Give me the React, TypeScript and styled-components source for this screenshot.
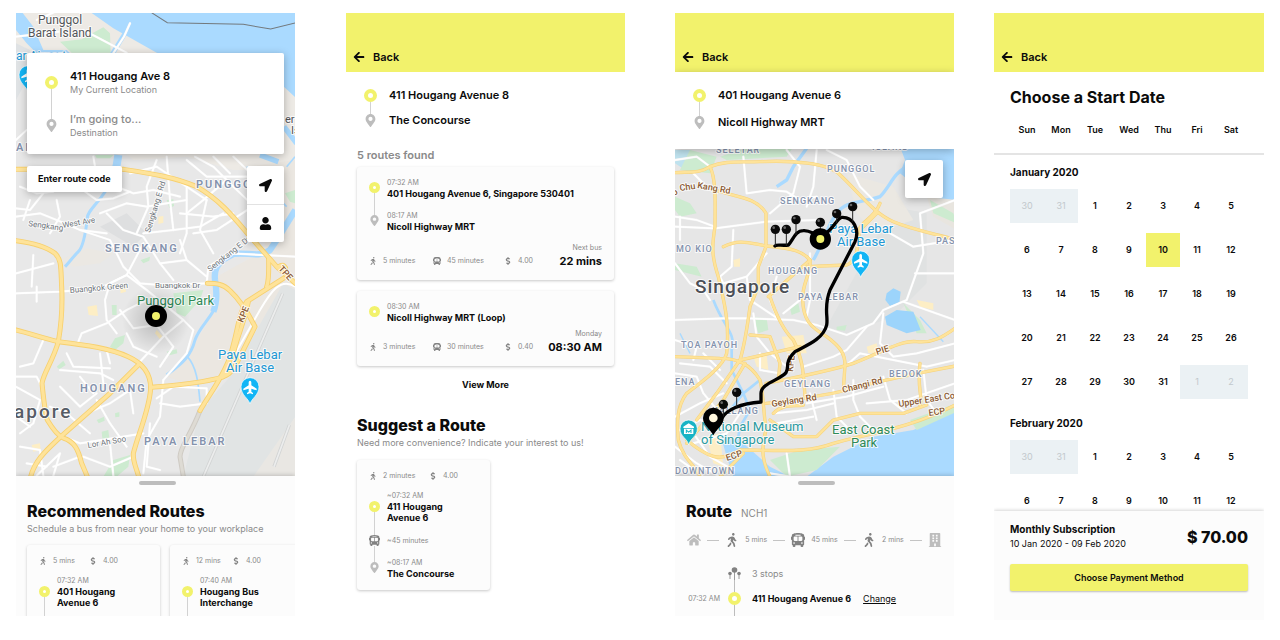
import React from "react";
import styled, { createGlobalStyle, css } from "styled-components";
import {
  FaArrowLeft,
  FaBuilding,
  FaBusAlt,
  FaDollarSign,
  FaHome,
  FaLocationArrow,
  FaMapMarkerAlt,
  FaUser,
  FaWalking,
} from "react-icons/fa";

const color = {
  yellow: "#f2f26c",
  ink: "#0b0b0b",
  grey: "#8a8a8a",
  icon: "#828282",
  pale: "#bdbdbd",
  line: "#d2d2d2",
  sheet: "#fcfcfc",
  blocked: "#ebf1f4",
};

const GlobalStyle = createGlobalStyle`
  *, *::before, *::after { box-sizing: border-box; }
  body {
    margin: 0;
    background: #fff;
    color: ${color.ink};
    font-family: Inter, "Liberation Sans", sans-serif;
    font-size: 10px;
    line-height: 12px;
  }
  h1, h2, h3, p, ol, ul { margin: 0; padding: 0; font-weight: inherit; }
  ol, ul { list-style: none; }
  button, input {
    font: inherit;
    color: inherit;
    border: 0;
    padding: 0;
    background: none;
  }
  button { cursor: pointer; }
  svg { display: block; }
`;

/* ---------- page ---------- */

const Page = styled.main`
  display: grid;
  grid-template-columns: 279fr 51px 279fr 50px 279fr 40px 270fr;
  align-items: start;
  padding: 13px 16px;
`;

const Screen = styled.section<{ $column: number; $height?: number }>`
  grid-column: ${(p) => p.$column};
  height: ${(p) => (p.$height ? `${p.$height}px` : "auto")};
  display: flex;
  flex-direction: column;
  min-width: 0;
  overflow: hidden;
`;

const Header = styled.header`
  flex: none;
  display: flex;
  align-items: flex-end;
  height: 59px;
  padding: 0 7px 8px;
  background: ${color.yellow};
`;

const BackButton = styled.button`
  display: flex;
  align-items: center;
  gap: 8px;
  font-size: 11px;
  line-height: 14px;
  font-weight: 600;
`;

const Content = styled.div`
  padding: 0 11px;
`;

const Title = styled.h2<{ $weight?: number }>`
  font-size: 16px;
  line-height: 22px;
  font-weight: ${(p) => p.$weight ?? 800};
`;

const Subtitle = styled.p`
  font-size: 9px;
  line-height: 14px;
  color: ${color.grey};
  white-space: nowrap;
`;

/* ---------- itinerary ---------- */

const Stops = styled.ol`
  display: flex;
  flex-direction: column;
`;

const StopRow = styled.li<{ $gap: number; $text: number }>`
  display: flex;
  gap: ${(p) => p.$text}px;
  > :last-child {
    padding-bottom: ${(p) => p.$gap}px;
  }
`;

const Track = styled.span<{ $size: number }>`
  flex: none;
  display: flex;
  flex-direction: column;
  align-items: center;
  width: ${(p) => p.$size}px;
`;

const Lead = styled.span<{ $height: number; $drawn: boolean }>`
  width: 1px;
  height: ${(p) => p.$height}px;
  background: ${(p) => (p.$drawn ? color.line : "transparent")};
`;

const Tail = styled.span`
  flex: 1;
  width: 1px;
  background: ${color.line};
`;

const Ring = styled.span<{ $size: number }>`
  flex: none;
  width: ${(p) => p.$size}px;
  height: ${(p) => p.$size}px;
  border: 4px solid ${color.yellow};
  border-radius: 50%;
  background: #fff;
`;

const Place = styled.span<{ $large?: boolean }>`
  display: block;
  font-weight: ${(p) => (p.$large ? 600 : 700)};
  font-size: ${(p) => (p.$large ? 11 : 9)}px;
  line-height: ${(p) => (p.$large ? 13 : 11)}px;
`;

const Time = styled.span`
  display: block;
  font-size: 7px;
  line-height: 11px;
  color: ${color.grey};
`;

interface StopProps {
  kind: "start" | "bus" | "end";
  size?: number;
  lead?: number;
  gap?: number;
  text?: number;
  first?: boolean;
  last?: boolean;
  children: React.ReactNode;
}

function Stop({ kind, size = 11, lead = 0, gap = 0, text = 7, first, last, children }: StopProps) {
  return (
    <StopRow $gap={gap} $text={text}>
      <Track $size={size}>
        <Lead $height={lead} $drawn={!first} />
        {kind === "start" && <Ring $size={size} />}
        {kind === "bus" && <FaBusAlt size={size} color={color.icon} />}
        {kind === "end" && <FaMapMarkerAlt size={size} color={color.pale} />}
        {!last && <Tail />}
      </Track>
      <div>{children}</div>
    </StopRow>
  );
}

/* ---------- route cards ---------- */

const Card = styled.article<{ $narrow?: boolean }>`
  flex: none;
  width: ${(p) => (p.$narrow ? "133px" : "auto")};
  padding: 10px 12px 11px;
  border-radius: 3px;
  background: ${color.sheet};
  box-shadow: 0 1px 3px rgba(0, 0, 0, 0.22);
`;

const Facts = styled.ul<{ $columns: string }>`
  display: grid;
  grid-template-columns: ${(p) => p.$columns};
  font-size: 7px;
  line-height: 11px;
  color: ${color.grey};
  white-space: nowrap;
`;

const FactItem = styled.li`
  display: grid;
  grid-template-columns: 14px auto;
  align-items: center;
`;

const Fact = ({ icon, children }: { icon: React.ReactNode; children: React.ReactNode }) => (
  <FactItem>
    {icon}
    {children}
  </FactItem>
);

const CardHead = styled.div`
  margin-bottom: 9px;
`;

const CardFoot = styled.div<{ $top: number }>`
  display: flex;
  justify-content: space-between;
  align-items: flex-end;
  margin-top: ${(p) => p.$top}px;
  ${Facts} {
    line-height: 16px;
  }
`;

const Departure = styled.p`
  font-size: 7px;
  line-height: 11px;
  color: ${color.grey};
  text-align: right;
  white-space: nowrap;
  strong {
    display: block;
    font-size: 11px;
    line-height: 16px;
    font-weight: 700;
    color: ${color.ink};
  }
`;

const walk = <FaWalking size={8} color={color.icon} />;
const bus = <FaBusAlt size={8} color={color.icon} />;
const dollar = <FaDollarSign size={8} color={color.icon} />;

/* ---------- maps ---------- */

const MapArea = styled.div<{ $height: number }>`
  position: relative;
  flex: none;
  height: ${(p) => p.$height}px;
  > svg {
    width: 100%;
    height: 100%;
  }
`;

const MapLabel = styled.text<{ $size: number; $tone: string; $weight?: number; $track?: number }>`
  font-family: Roboto, sans-serif;
  font-size: ${(p) => p.$size}px;
  font-weight: ${(p) => p.$weight ?? 400};
  fill: ${(p) => p.$tone};
  letter-spacing: ${(p) => p.$track ?? 0}px;
  paint-order: stroke;
  stroke: rgba(255, 255, 255, 0.8);
  stroke-width: 2px;
  stroke-linejoin: round;
`;

const district = { $size: 11, $tone: "#8492ad", $weight: 600, $track: 2 };
const smallDistrict = { $size: 9, $tone: "#8492ad", $weight: 500, $track: 1 };
const street = { $size: 8, $tone: "#6f757b" };
const highway = { $size: 9, $tone: "#8a5a33", $weight: 500 };
const airport = { $size: 13, $tone: "#2196d3" };
const park = { $size: 13, $tone: "#2f8a57" };
const museum = { $size: 13, $tone: "#2a9aa0" };

const Roads = ({ paths, width, fill, edge, rim = 4 }: { paths: string[]; width: number; fill: string; edge: string; rim?: number }) => (
  <g fill="none" strokeLinecap="round" strokeLinejoin="round">
    {paths.map((d) => (
      <path key={d} d={d} stroke={edge} strokeWidth={width + rim} />
    ))}
    {paths.map((d) => (
      <path key={d} d={d} stroke={fill} strokeWidth={width} />
    ))}
  </g>
);

const AirportPin = ({ x, y }: { x: number; y: number }) => (
  <g transform={`translate(${x} ${y})`}>
    <path d="M0 52C-5 34-27 26-27 0a27 27 0 0 1 54 0C27 26 5 34 0 52Z" fill="#12b5f5" stroke="#fff" strokeWidth="2" />
    <path d="M0-18c3 0 4 3 4 6v8l16 10v5L4 6v9l5 4v4l-9-3-9 3v-4l5-4V6l-16 5V6L-4-4v-8c0-3 1-6 4-6Z" fill="#fff" />
  </g>
);

const homeStreets = [
  "M110 60L200 20M48 110L180 95M250 90L380 158M390 70L372 110L330 175",
  "M48 420L80 390M48 625L90 630L130 580M60 560L110 580L160 575",
  "M255 575L290 600L340 595L390 575M300 640L380 610L440 620L560 600M470 480L440 560L445 620L410 700",
  "M390 520L470 500L560 560L620 600M350 560L400 580L460 570L540 590M500 470L510 600L520 690",
  "M430 700L520 690L600 680L670 640M560 560L560 700L540 760M540 640L640 650L700 640",
  "M280 470L285 500L300 560M585 470L640 500L700 560L742 600M640 470L690 520M560 480L620 530L740 530",
  "M680 540L610 600L560 640M700 470L742 510M620 600L600 690L640 760M742 630L650 690L580 700",
  "M48 650L120 640L170 660L240 690L320 700M170 600L180 650L150 700M90 600L70 660",
  "M240 690L330 720L370 800L420 850L480 855L620 850M320 640L370 690L430 710L480 790L520 840",
  "M430 730L380 825L330 850L315 900L320 960L350 1000M380 825L440 870L550 960L580 990L560 1060L490 1140",
  "M48 880L180 875L300 865L380 825M110 860V905M48 820L160 790M100 765L95 860",
  "M620 850L625 800L690 760L885 770M480 790L560 780L620 830M540 720L560 780",
  "M235 1025L245 1000L320 970L380 930L440 900M360 930L400 985L470 975L520 1040L480 1100",
  "M550 960L490 1010L415 1090M320 1050L330 1090M380 1000L400 1040L470 1070",
  "M490 1140L480 1250L440 1320L430 1420M470 1195L520 1160L620 1165V1210L540 1220L480 1210",
  "M450 1270L440 1400L480 1410M48 1130L110 1130L125 1160M48 1160L120 1200L100 1270L60 1300",
  "M180 1110L300 1120L340 1140M180 1160L240 1220L290 1180M150 1220L200 1240L270 1300M260 1240L330 1210L390 1170L400 1240",
  "M190 1310L240 1330L370 1310L430 1300M290 1200L330 1270L380 1340M330 1330L340 1427M250 1370L330 1400L400 1370",
  "M110 1427L180 1360L160 1427M160 1400L240 1370M60 1340L120 1350L130 1427M48 1250L90 1280M80 1390L140 1400",
  "M200 1060L220 1100L330 1105M300 1060L310 1150M240 1130L280 1180M130 1020L100 1090L60 1100",
];

const homeHighways = [
  "M48 508L370 508C450 520 520 530 590 560C660 600 700 650 742 700L830 800L886 850",
  "M48 722C110 730 145 745 165 760C185 780 182 800 185 860C188 920 186 960 175 1025C160 1080 130 1120 126 1150C130 1190 135 1240 142 1260C160 1290 175 1308 190 1314C225 1325 235 1350 245 1390L262 1430",
  "M48 990C90 1000 130 1015 175 1025C260 1035 330 1045 385 1070C430 1090 452 1120 452 1165C448 1230 415 1300 400 1360C398 1385 408 1400 416 1430",
  "M415 1095L330 1180L180 1312C140 1350 105 1380 92 1430",
  "M452 1162C540 1155 610 1145 640 1138C690 1128 695 1115 710 1090L765 980C740 930 720 900 690 872C670 852 650 850 622 850",
  "M856 815C860 800 850 790 836 800M850 835L740 905C715 940 715 990 690 1070C670 1130 630 1180 600 1232",
  "M745 905C735 960 715 1000 700 1060L668 1130M800 860C808 840 806 800 806 775",
];

function HomeMap() {
  return (
    <svg viewBox="16 13 279 463" preserveAspectRatio="xMidYMid slice" role="img" aria-label="Map of Hougang and Punggol">
      <defs>
        <radialGradient id="glow">
          <stop offset="0" stopColor="#000" stopOpacity="0.2" />
          <stop offset="1" stopColor="#000" stopOpacity="0" />
        </radialGradient>
      </defs>
      <g transform="scale(0.33334)">
        <rect x="40" y="30" width="860" height="1410" fill="#e8e8e8" />
        <path d="M48 39H886V510H700L560 470L400 480L300 400L48 180Z" fill="#edeae5" />
        <path d="M650 830L740 780L800 760L886 770V860L800 960L720 1130L560 1150L500 1130L560 1070L640 940Z" fill="#ebe7e1" />
        <path d="M742 500L886 480V770L800 760Z" fill="#ebe7e1" />
        <path d="M180 780L260 745L340 760L300 790L220 800Z" fill="#ebe8e3" />
        <path d="M850 850L886 870V1250L770 1430H550L600 1232L690 1130Z" fill="#e1e4e4" />
        <path d="M886 1250V1430H760Z" fill="#e9e7e3" />
        <path d="M275 39H886V292L840 250L470 158L340 85Z" fill="#aadaff" />
        <path d="M48 39H68L100 80L130 150L200 150L210 160H110L80 130L48 90Z" fill="#aadaff" />
        <path d="M48 130L90 150L70 260L48 300Z" fill="#dfe2e4" />
        <path d="M450 35L502 68L730 73L812 87L890 68" fill="none" stroke="#73797d" strokeWidth="3" />
        <g fill="#cdebd0">
          <path d="M180 125L245 118L285 95L310 82L330 100L332 158H215Z" />
          <path d="M500 600L520 598L522 618L508 624Z" />
          <path d="M855 580L886 570V610L870 605Z" />
          <path d="M520 880L610 870L600 900L555 950L530 940Z" />
          <path d="M330 1040L345 1015L375 1005L370 1030L345 1050Z" />
          <path d="M170 1100L190 1082L197 1095L178 1108Z" />
          <path d="M340 1380L390 1365L385 1400L350 1430H310Z" />
          <path d="M500 1055L530 1048L532 1060L508 1066Z" />
          <path d="M305 1295L325 1290L328 1315L308 1325ZM290 1260L312 1250L314 1262L296 1270ZM345 1240L358 1236V1250L346 1252Z" />
          <path d="M335 915H350V945H337ZM422 780L450 770L448 782L430 790ZM285 465H340L330 475H290Z" />
        </g>
        <g fill="#fdeec5">
          <path d="M475 650L490 648V668L475 672ZM360 860L375 855L378 875L362 880ZM262 920L290 915L294 948L266 945ZM95 1335L120 1330L122 1350L100 1355ZM470 990L488 1010L480 1018L465 1000Z" />
        </g>
        <path d="M300 680L380 640L440 700L400 740Z" fill="#dedfe0" />
        <g fill="none" stroke="#aadaff" strokeLinejoin="round">
          <path d="M375 100L335 165" strokeWidth="14" />
          <path d="M355 465C350 510 345 510 335 545" strokeWidth="24" />
          <path d="M335 540C310 600 260 630 262 655C258 690 250 740 235 755C215 775 205 790 195 800" strokeWidth="9" />
          <path d="M852 380L890 430M780 465L835 485" strokeWidth="16" />
          <path d="M886 630L830 720L810 750C780 775 740 755 700 762C660 780 640 800 645 840C652 880 650 910 640 935" strokeWidth="19" />
          <path d="M645 925C620 970 600 980 585 1020C570 1080 530 1100 500 1125" strokeWidth="9" />
          <path d="M562 1070C590 1100 595 1150 600 1205M860 500L885 470M740 500L860 620" strokeWidth="5" />
        </g>
        <Roads paths={homeStreets} width={5} fill="#fff" edge="#f4f4f4" rim={2} />
        <path d="M600 1232C570 1310 540 1340 540 1370L550 1430" fill="none" stroke="#cfcbc4" strokeWidth="15" />
        <path d="M600 1232C570 1310 540 1340 540 1370L550 1430" fill="none" stroke="#dedbd4" strokeWidth="9" />
        <path d="M848 880L610 1430M868 1275L822 1400" fill="none" stroke="#d2d4d4" strokeWidth="10" />
        <path d="M848 880L610 1430M868 1275L822 1400" fill="none" stroke="#eceded" strokeWidth="5" />
        <path d="M886 860C840 830 810 880 780 930L700 1070" fill="none" stroke="#fff" strokeWidth="6" />
        <Roads paths={homeHighways} width={10} fill="#fee39a" edge="#f7d06e" rim={5} />
        <AirportPin x={750} y={1160} />
        <AirportPin x={84} y={224} />
      </g>
      <MapLabel x="38" y="24" $size={12} $tone="#53565a">Punggol</MapLabel>
      <MapLabel x="28" y="37" $size={12} $tone="#53565a">Barat Island</MapLabel>
      <MapLabel x="16" y="60" $size={12} $tone="#2196d3">ar Airport</MapLabel>
      <MapLabel x="285" y="123" $size={11} $tone="#53565a">er</MapLabel>
      <MapLabel x="291" y="134" $size={11} $tone="#53565a">Is</MapLabel>
      <MapLabel x="16" y="151" {...district}>AI</MapLabel>
      <MapLabel x="196" y="188" {...district}>PUNGGOL</MapLabel>
      <MapLabel x="105" y="252" {...district}>SENGKANG</MapLabel>
      <MapLabel x="80" y="392" {...district}>HOUGANG</MapLabel>
      <MapLabel x="144" y="445" {...district}>PAYA LEBAR</MapLabel>
      <MapLabel x="28" y="226" {...street} transform="rotate(8 28 226)">Sengkang</MapLabel>
      <MapLabel x="63" y="228" {...street} transform="rotate(-10 63 228)">West Ave</MapLabel>
      <MapLabel x="150" y="233" {...street} transform="rotate(-73 150 233)">Sengkang E Rd</MapLabel>
      <MapLabel x="210" y="272" {...street} transform="rotate(-38 210 272)">Sengkang E Dr</MapLabel>
      <MapLabel x="70" y="293" {...street} transform="rotate(-5 70 293)">Buangkok Green</MapLabel>
      <MapLabel x="155" y="288" {...street}>Buangkok Dr</MapLabel>
      <MapLabel x="88" y="448" {...street} transform="rotate(-10 88 448)">Lor Ah Soo</MapLabel>
      <MapLabel x="137" y="305" {...park}>Punggol Park</MapLabel>
      <MapLabel x="278" y="269" {...highway} transform="rotate(48 278 269)">TPE</MapLabel>
      <MapLabel x="243" y="323" {...highway} transform="rotate(-68 243 323)">KPE</MapLabel>
      <MapLabel x="218" y="359" {...airport}>Paya Lebar</MapLabel>
      <MapLabel x="226" y="372" {...airport}>Air Base</MapLabel>
      <MapLabel x="14" y="418" $size={19} $tone="#565c66" $weight={500} $track={2}>apore</MapLabel>
      <circle cx="156" cy="320" r="34" fill="url(#glow)" />
      <circle cx="156" cy="316" r="11" fill="#000" />
      <circle cx="156" cy="316" r="4" fill={color.yellow} />
    </svg>
  );
}

const routeStreets = [
  "M45 480L110 470L150 500M250 470L260 580L330 570L380 575L420 600L470 590M380 450L420 500L400 580L330 640",
  "M470 450L460 560L440 620M500 450L560 480L600 560L640 600M45 650L110 660L165 680M60 650V720M170 580L140 560L100 520",
  "M45 680L165 685L320 665L480 660M220 690L215 800L180 830M320 760L260 830L270 900L360 960",
  "M45 960L190 955L270 955L400 960L470 975L560 1005L640 970L670 930L740 900L790 760L780 640L885 600",
  "M730 905L885 960M670 940L660 1030L700 1070L770 1060L885 1030M765 820H885M690 700L760 740L885 720",
  "M430 1100L520 1070L560 1050L620 980M440 1210L560 1190L670 1160M560 1095L600 1060L800 1100L885 1080",
  "M580 1140V1200L600 1250L640 1290M450 1180L470 1260M520 1170L530 1250L560 1280M670 1130L690 1200L740 1240",
  "M620 1210L740 1200L885 1150M790 1110L800 1200L830 1240M340 1240L440 1230L520 1210M350 1270L460 1250",
  "M45 1120L110 1130L130 1180L180 1240M60 1090L150 1100L200 1150M45 1250L120 1210L190 1180M100 1330L200 1300L240 1240",
  "M45 1340L110 1390L180 1430M100 1300L150 1370L220 1410M60 1290L120 1260L180 1270M380 1360L390 1430L330 1420",
  "M100 1080L110 1040L45 1020M130 1060L180 1110M330 1060L380 1100M300 1060V1110L360 1120",
  "M280 940L290 1010L330 1060M350 830L330 900L350 950M420 900L370 940M60 1380L130 1430",
  "M45 790L90 850L130 870L150 900M180 830L190 850L260 830M450 760V900L440 950",
];

const routeHighways = [
  "M45 518C90 515 120 520 150 500C200 480 240 488 300 485C400 480 500 490 535 520C600 580 640 640 700 665C760 690 820 700 885 718",
  "M150 500C170 540 165 620 165 680C155 740 155 770 175 830C190 900 210 960 200 1060C190 1100 120 1150 80 1180C50 1220 50 1270 55 1320C70 1380 110 1400 120 1430",
  "M165 570C220 590 290 590 318 640V740M190 740C240 715 270 730 320 738C400 745 430 755 450 780C455 820 425 850 428 900C430 960 450 980 500 1010C540 1040 555 1060 555 1095L550 1170",
  "M318 740L295 800V860L270 920C262 980 255 1030 240 1080M330 890C350 950 370 990 400 1020C430 1080 430 1120 435 1190M450 780L325 890",
  "M45 1070L180 1075C230 1075 270 1090 300 1140C310 1180 310 1230 318 1290C300 1350 310 1390 330 1430",
  "M240 1080L170 1180L110 1260M255 1090L190 1200L80 1330M318 1150C420 1130 520 1110 580 1090C660 1060 720 1020 770 1025C820 1030 850 1010 885 985",
  "M318 1210C400 1200 480 1190 560 1170C660 1140 770 1120 885 1098M340 1240C370 1210 400 1220 430 1215",
  "M240 1350C360 1350 440 1360 520 1330C620 1300 740 1290 885 1215M80 1320C140 1370 180 1390 240 1350",
  "M440 800L560 795C600 780 590 720 600 690L650 640M660 610C650 640 620 660 610 670C580 700 600 720 590 760",
  "M270 1005L330 1010L360 1090L355 1140M780 1090C770 1160 790 1200 780 1215M240 1080L420 1040M180 1430L250 1360",
  "M330 1260L400 1310L470 1310L520 1260L600 1240L730 1240L800 1215",
];

const routePath =
  "M345 738C350 732 365 738 385 735C400 720 405 692 430 692C455 690 465 710 490 705C520 690 530 655 545 652C580 650 600 690 585 725L510 870C490 920 505 950 500 975C490 1020 430 1040 405 1055C370 1090 390 1100 378 1118C360 1140 303 1150 303 1180V1206C240 1210 200 1230 185 1255L162 1285";

const stopPins = [
  [346, 688, 738],
  [379, 688, 738],
  [408, 659, 705],
  [481, 667, 700],
  [530, 641, 670],
  [578, 620, 665],
  [230, 1177, 1220],
  [190, 1213, 1250],
];

function RouteMap() {
  return (
    <svg viewBox="15 149 279 327" preserveAspectRatio="xMidYMid slice" role="img" aria-label="Map of the route from Hougang to Nicoll Highway">
      <g transform="scale(0.33334)">
        <rect x="40" y="440" width="860" height="1000" fill="#e6e6e6" />
        <path d="M600 800L700 620L800 640L800 850L700 950L560 1000L500 980Z" fill="#e0e2e2" />
        <path d="M560 520L700 560L760 660L640 700L590 640Z" fill="#ebe8e2" />
        <path d="M720 440H890V640L830 610L770 560L720 520L735 480Z" fill="#aadaff" />
        <path d="M800 590L890 600V690L820 650Z" fill="#e8e5df" />
        <path d="M45 450H90L140 480L90 520L45 490Z" fill="#bfe2ee" />
        <path d="M890 1230L760 1290L640 1310L520 1370L440 1430H890Z" fill="#aadaff" />
        <path d="M180 1300L250 1330L330 1400L390 1430H220L200 1370Z" fill="#aadaff" />
        <g fill="#cdebd0">
          <path d="M90 450L170 470L150 520L60 510ZM45 590L90 610L110 640L60 650L45 630ZM45 790L110 800L125 830L45 810Z" />
          <path d="M330 1380L420 1350L540 1340L470 1410L380 1430ZM750 1260L890 1210V1235L770 1290ZM810 600L880 640L890 670L820 640Z" />
          <path d="M280 950L320 955L325 990L295 1000ZM390 925L415 910L420 935L395 945ZM730 910L780 960L800 1000L770 1000ZM530 980L560 975L555 992L530 990Z" />
          <path d="M180 470L270 440H400L380 470L200 480Z" />
        </g>
        <g fill="#fdeec5">
          <path d="M365 1010L430 1005L440 1060L380 1060ZM280 1070L320 1065L325 1110L290 1100ZM220 780L240 775V800L222 800ZM620 1040L650 1030L655 1060L625 1060ZM770 900L820 910V930L780 920ZM140 1310L180 1300L190 1400L160 1390Z" />
        </g>
        <path d="M680 880L700 865L722 875L718 910L690 918L676 900ZM675 950L710 930L760 935L782 990L740 1000L680 975Z" fill="#9cd4fb" />
        <g fill="none" stroke="#aadaff">
          <path d="M440 445L400 500L380 540L350 560M740 500C700 520 690 560 660 590C600 610 560 600 530 640C500 680 490 730 460 780" strokeWidth="10" />
          <path d="M160 900C190 980 230 1000 215 1050L215 1110L250 1180L210 1230M250 1180L300 1140M250 1180L270 1230L240 1280L230 1340L200 1380" strokeWidth="8" />
          <path d="M780 950L850 1025M60 1000L90 1060" strokeWidth="4" />
        </g>
        <Roads paths={routeStreets} width={5} fill="#fff" edge="#f3f3f3" rim={2} />
        <Roads paths={routeHighways} width={7} fill="#fee39a" edge="#f6d27a" rim={3} />
        <AirportPin x={602} y={780} />
        <path d="M86 1335C82 1315 60 1310 60 1286a26 26 0 0 1 52 0C112 1310 90 1315 86 1335Z" fill="#17b3c5" stroke="#fff" strokeWidth="2" />
        <path d="M70 1280L86 1270L102 1280V1284H70ZM72 1286H100V1302H72Z" fill="#fff" />
        <path d="M79 1299V1290L86 1296L93 1290V1299" fill="none" stroke="#17b3c5" strokeWidth="3" />
      </g>
      <g transform="translate(-660 0)">
        <MapLabel x="716" y="153" {...smallDistrict}>SELETAR</MapLabel>
        <MapLabel x="872" y="150" {...smallDistrict}>ISLAND</MapLabel>
        <MapLabel x="827" y="172" {...smallDistrict}>PUNGGOL</MapLabel>
        <MapLabel x="780" y="204" {...smallDistrict}>SENGKANG</MapLabel>
        <MapLabel x="676" y="252" {...smallDistrict}>MO KIO</MapLabel>
        <MapLabel x="936" y="244" {...smallDistrict}>PAS</MapLabel>
        <MapLabel x="768" y="274" {...smallDistrict}>HOUGANG</MapLabel>
        <MapLabel x="798" y="300" {...smallDistrict}>PAYA LEBAR</MapLabel>
        <MapLabel x="681" y="348" {...smallDistrict}>TOA PAYOH</MapLabel>
        <MapLabel x="675" y="385" {...smallDistrict}>ENA</MapLabel>
        <MapLabel x="784" y="387" {...smallDistrict}>GEYLANG</MapLabel>
        <MapLabel x="889" y="377" {...smallDistrict}>BEDOK</MapLabel>
        <MapLabel x="712" y="414" {...smallDistrict}>KALLANG</MapLabel>
        <MapLabel x="675" y="474" {...smallDistrict}>DOWNTOWN</MapLabel>
        <MapLabel x="674" y="196" {...highway} transform="rotate(-30 674 196)">o</MapLabel>
        <MapLabel x="680" y="191" {...highway} transform="rotate(-8 680 191)">Chu</MapLabel>
        <MapLabel x="697" y="188" {...highway} transform="rotate(10 697 188)">Kang Rd</MapLabel>
        <MapLabel x="877" y="355" {...highway} transform="rotate(-18 877 355)">PIE</MapLabel>
        <MapLabel x="793" y="372" {...highway} transform="rotate(-84 793 372)">KPE</MapLabel>
        <MapLabel x="843" y="393" {...highway} transform="rotate(-14 843 393)">Changi Rd</MapLabel>
        <MapLabel x="772" y="407" {...highway} transform="rotate(-9 772 407)">Geylang Rd</MapLabel>
        <MapLabel x="899" y="407" {...highway} transform="rotate(-9 899 407)">Upper East Co</MapLabel>
        <MapLabel x="929" y="416" {...highway} transform="rotate(-8 929 416)">ECP</MapLabel>
        <MapLabel x="727" y="461" {...highway} transform="rotate(-18 727 461)">ECP</MapLabel>
        <MapLabel x="829" y="233" {...airport}>Paya Lebar</MapLabel>
        <MapLabel x="837" y="246" {...airport}>Air Base</MapLabel>
        <MapLabel x="695" y="293" $size={19} $tone="#4b4f56" $weight={500} $track={1}>Singapore</MapLabel>
        <MapLabel x="701" y="431" {...museum}>National Museum</MapLabel>
        <MapLabel x="701" y="444" {...museum}>of Singapore</MapLabel>
        <MapLabel x="832" y="434" {...park}>East Coast</MapLabel>
        <MapLabel x="851" y="447" {...park}>Park</MapLabel>
      </g>
      <g transform="scale(0.33334)">
        <path d={routePath} fill="none" stroke="#000" strokeWidth="10" strokeLinecap="round" strokeLinejoin="round" />
        {stopPins.map(([x, y, foot]) => (
          <g key={`${x}-${y}`}>
            <path d={`M${x} ${y}V${foot}`} stroke="#222" strokeWidth="3" />
            <circle cx={x} cy={y} r="14" fill="#0a0a0a" />
            <circle cx={x - 5} cy={y - 5} r="4" fill="#666" />
          </g>
        ))}
        <circle cx="481" cy="717" r="32" fill="#000" />
        <circle cx="481" cy="717" r="12" fill={color.yellow} />
        <path d="M160 1306C148 1284 129 1276 129 1254a31 31 0 0 1 62 0C191 1276 172 1284 160 1306Z" fill="#000" />
        <circle cx="160" cy="1254" r="13" fill="#fff7dd" />
      </g>
    </svg>
  );
}

const MapOverlay = styled.div`
  position: absolute;
  inset: 0 11px auto;
  display: grid;
  grid-template-columns: 1fr auto;
  justify-items: start;
  align-items: start;
  row-gap: 12px;
  padding-top: 40px;
`;

const raised = css`
  background: #fff;
  border-radius: 2px;
  box-shadow: 0 2px 8px rgba(0, 0, 0, 0.28);
`;

const SearchCard = styled.form`
  ${raised}
  grid-column: 1 / -1;
  justify-self: stretch;
  height: 101px;
  padding: 16px 18px;
`;

const SearchName = styled.strong`
  display: block;
  font-size: 11px;
  line-height: 14px;
  font-weight: 600;
`;

const SearchInput = styled.input`
  display: block;
  width: 100%;
  height: 14px;
  font-size: 11px;
  line-height: 14px;
  font-weight: 500;
  &::placeholder {
    color: ${color.grey};
    opacity: 1;
  }
`;

const SearchHint = styled.label`
  display: block;
  font-size: 9px;
  line-height: 14px;
  color: ${color.grey};
`;

const CodeButton = styled.button`
  ${raised}
  padding: 0 11px;
  font-size: 9px;
  line-height: 26px;
  font-weight: 700;
`;

const MapButtons = styled.div`
  ${raised}
  width: 37px;
  overflow: hidden;
`;

const MapButton = styled.button`
  display: flex;
  align-items: center;
  justify-content: center;
  width: 100%;
  height: 38px;
  & + & {
    border-top: 1px solid #e2e2e2;
  }
`;

const LocateButton = styled(MapButton)`
  ${raised}
  position: absolute;
  top: 11px;
  right: 11px;
  width: 38px;
`;

/* ---------- bottom sheet ---------- */

const Sheet = styled.div`
  position: relative;
  flex: 1;
  display: flex;
  flex-direction: column;
  min-height: 0;
  padding: 5px 0 0 11px;
  overflow: hidden;
  background: ${color.sheet};
  box-shadow: 0 -1px 4px rgba(0, 0, 0, 0.18);
`;

const Handle = styled.span`
  flex: none;
  align-self: center;
  width: 37px;
  height: 4px;
  margin: 0 8px 15px 0;
  border-radius: 2px;
  background: ${color.pale};
`;

const CardRail = styled.div`
  display: flex;
  gap: 10px;
  margin-top: 9px;
`;

const RouteTitle = styled.div`
  display: flex;
  align-items: baseline;
  gap: 9px;
  font-size: 10px;
  color: ${color.grey};
  h2 {
    color: ${color.ink};
  }
`;

const Legs = styled.ul`
  display: flex;
  align-items: center;
  gap: 6px;
  margin: 10px 12px 19px 1px;
  font-size: 7px;
  line-height: 16px;
  color: ${color.grey};
  white-space: nowrap;
`;

const Leg = styled.li`
  flex: none;
  display: flex;
  align-items: center;
  gap: 6px;
`;

const Dash = styled.li`
  flex: 1;
  height: 1px;
  background: #c4c4c4;
`;

const Detail = styled.div`
  display: grid;
  grid-template-columns: 34px 13px 1fr;
  column-gap: 8px;
  align-items: center;
  font-size: 9px;
  line-height: 13px;
`;

const DetailTime = styled(Time)`
  grid-column: 1;
  text-align: right;
`;

const DetailLine = styled.span`
  grid-column: 2;
  justify-self: center;
  width: 1px;
  height: 12px;
  background: ${color.pale};
`;

const DetailText = styled.span<{ $muted?: boolean }>`
  grid-column: 3;
  display: flex;
  gap: 12px;
  padding-left: 3px;
  color: ${(p) => (p.$muted ? color.grey : color.ink)};
  font-weight: ${(p) => (p.$muted ? 400 : 700)};
  white-space: nowrap;
`;

const ChangeLink = styled.a`
  color: inherit;
  font-weight: 400;
  text-decoration: underline;
`;

const StopsIcon = styled.svg`
  grid-column: 2;
  width: 13px;
  height: 13px;
`;

/* ---------- results ---------- */

const Journey = styled.div<{ $bottom: number; $raised?: boolean }>`
  position: relative;
  z-index: 1;
  padding: 17px 18px ${(p) => p.$bottom}px;
  background: #fff;
  box-shadow: ${(p) => (p.$raised ? "0 2px 8px rgba(0, 0, 0, 0.25)" : "none")};
`;

const ResultCount = styled.h2`
  margin-bottom: 5px;
  font-size: 11px;
  line-height: 13px;
  font-weight: 600;
  color: ${color.grey};
`;

const CardStack = styled.div`
  display: flex;
  flex-direction: column;
  gap: 11px;
`;

const MoreButton = styled.button`
  display: block;
  width: 100%;
  margin: 12px 0 22px;
  font-size: 9px;
  line-height: 14px;
  font-weight: 700;
`;

const SuggestCard = styled.div`
  margin: 10px 0;
`;

/* ---------- calendar ---------- */

const CalendarHead = styled.div`
  flex: none;
  padding: 14px 16px 0;
  border-bottom: 2px solid #e4e4e4;
`;

const Week = styled.div`
  display: grid;
  grid-template-columns: repeat(7, 1fr);
  margin-top: 16px;
  padding-bottom: 17px;
  font-size: 9px;
  line-height: 12px;
  font-weight: 600;
  text-align: center;
`;

const Months = styled.div`
  flex: 1;
  min-height: 0;
  overflow: hidden;
  padding: 0 16px;
`;

const MonthName = styled.h3`
  padding: 10px 0;
  font-size: 10px;
  line-height: 14px;
  font-weight: 700;
`;

const Days = styled.div`
  display: grid;
  grid-template-columns: repeat(7, 1fr);
  row-gap: 10px;
  margin-bottom: 7px;
`;

const Day = styled.button<{ $selected?: boolean }>`
  height: 34px;
  font-size: 9px;
  line-height: 12px;
  font-weight: 600;
  background: ${(p) => (p.$selected ? color.yellow : "transparent")};
  &:disabled {
    background: ${color.blocked};
    color: #c2c8cc;
    font-weight: 400;
    cursor: default;
  }
`;

const PayBar = styled.footer`
  position: relative;
  flex: none;
  padding: 11px 16px 29px;
  background: ${color.sheet};
  box-shadow: 0 -1px 3px rgba(0, 0, 0, 0.16);
`;

const Summary = styled.div`
  display: flex;
  justify-content: space-between;
  align-items: center;
  margin-bottom: 13px;
  p {
    font-size: 9px;
    line-height: 15px;
  }
  h3 {
    font-size: 10px;
    line-height: 14px;
    font-weight: 700;
  }
`;

const Price = styled.strong`
  font-size: 16px;
  line-height: 22px;
  font-weight: 800;
`;

const PayButton = styled.button`
  width: 100%;
  border-radius: 2px;
  background: ${color.yellow};
  box-shadow: 0 1px 2px rgba(0, 0, 0, 0.25);
  font-size: 9px;
  line-height: 27px;
  font-weight: 600;
`;

const range = (from: number, to: number) => Array.from({ length: to - from + 1 }, (_, i) => from + i);

interface MonthProps {
  name: string;
  before: number[];
  days: number[];
  after?: number[];
  selected?: number;
}

function Month({ name, before, days, after = [], selected }: MonthProps) {
  return (
    <section>
      <MonthName>{name}</MonthName>
      <Days>
        {before.map((d) => (
          <Day key={`b${d}`} disabled>{d}</Day>
        ))}
        {days.map((d) => (
          <Day key={d} $selected={d === selected}>{d}</Day>
        ))}
        {after.map((d) => (
          <Day key={`a${d}`} disabled>{d}</Day>
        ))}
      </Days>
    </section>
  );
}

const Back = () => (
  <Header>
    <BackButton type="button">
      <FaArrowLeft size={12} />
      Back
    </BackButton>
  </Header>
);

/* ---------- screens ---------- */

const recommended = [
  { walk: "5 mins", price: "4.00", time: "07:32 AM", place: ["401 Hougang", "Avenue 6"] },
  { walk: "12 mins", price: "4.00", time: "07:40 AM", place: ["Hougang Bus", "Interchange"] },
];

function HomeScreen() {
  return (
    <Screen $column={1} $height={603}>
      <MapArea $height={463}>
        <HomeMap />
        <MapOverlay>
          <SearchCard>
            <Stops>
              <Stop kind="start" size={13} lead={7} gap={15} text={12} first>
                <SearchName>411 Hougang Ave 8</SearchName>
                <Subtitle>My Current Location</Subtitle>
              </Stop>
              <Stop kind="end" size={13} lead={7} text={12} last>
                <SearchInput id="destination" placeholder="I’m going to..." />
                <SearchHint htmlFor="destination">Destination</SearchHint>
              </Stop>
            </Stops>
          </SearchCard>
          <CodeButton type="button">Enter route code</CodeButton>
          <MapButtons>
            <MapButton type="button" aria-label="Locate me">
              <FaLocationArrow size={13} />
            </MapButton>
            <MapButton type="button" aria-label="Profile">
              <FaUser size={13} />
            </MapButton>
          </MapButtons>
        </MapOverlay>
      </MapArea>
      <Sheet>
        <Handle />
        <Title>Recommended Routes</Title>
        <Subtitle>Schedule a bus from near your home to your workplace</Subtitle>
        <CardRail>
          {recommended.map((r) => (
            <Card key={r.time} $narrow>
              <CardHead>
                <Facts $columns="50px auto">
                  <Fact icon={walk}>{r.walk}</Fact>
                  <Fact icon={dollar}>{r.price}</Fact>
                </Facts>
              </CardHead>
              <Stops>
                <Stop kind="start" lead={11} gap={12} first>
                  <Time>{r.time}</Time>
                  {r.place.map((line) => (
                    <Place key={line}>{line}</Place>
                  ))}
                </Stop>
              </Stops>
            </Card>
          ))}
        </CardRail>
      </Sheet>
    </Screen>
  );
}

function ResultsScreen() {
  return (
    <Screen $column={3}>
      <Back />
      <Journey $bottom={22}>
        <Stops>
          <Stop kind="start" size={13} gap={12} text={12} first>
            <Place $large>411 Hougang Avenue 8</Place>
          </Stop>
          <Stop kind="end" size={13} text={12} last>
            <Place $large>The Concourse</Place>
          </Stop>
        </Stops>
      </Journey>
      <Content>
        <ResultCount>5 routes found</ResultCount>
        <CardStack>
          <Card>
            <Stops>
              <Stop kind="start" lead={5} gap={11} first>
                <Time>07:32 AM</Time>
                <Place>401 Hougang Avenue 6, Singapore 530401</Place>
              </Stop>
              <Stop kind="end" lead={5} last>
                <Time>08:17 AM</Time>
                <Place>Nicoll Highway MRT</Place>
              </Stop>
            </Stops>
            <CardFoot $top={10}>
              <Facts $columns="64px 71px auto">
                <Fact icon={walk}>5 minutes</Fact>
                <Fact icon={bus}>45 minutes</Fact>
                <Fact icon={dollar}>4.00</Fact>
              </Facts>
              <Departure>
                Next bus
                <strong>22 mins</strong>
              </Departure>
            </CardFoot>
          </Card>
          <Card>
            <Stops>
              <Stop kind="start" lead={5} first last>
                <Time>08:30 AM</Time>
                <Place>Nicoll Highway MRT (Loop)</Place>
              </Stop>
            </Stops>
            <CardFoot $top={5}>
              <Facts $columns="64px 71px auto">
                <Fact icon={walk}>3 minutes</Fact>
                <Fact icon={bus}>30 minutes</Fact>
                <Fact icon={dollar}>0.40</Fact>
              </Facts>
              <Departure>
                Monday
                <strong>08:30 AM</strong>
              </Departure>
            </CardFoot>
          </Card>
        </CardStack>
        <MoreButton type="button">View More</MoreButton>
        <Title>Suggest a Route</Title>
        <Subtitle>Need more convenience? Indicate your interest to us!</Subtitle>
        <SuggestCard>
          <Card $narrow>
            <CardHead>
              <Facts $columns="60px auto">
                <Fact icon={walk}>2 minutes</Fact>
                <Fact icon={dollar}>4.00</Fact>
              </Facts>
            </CardHead>
            <Stops>
              <Stop kind="start" lead={11} gap={12} first>
                <Time>~07:32 AM</Time>
                <Place>411 Hougang</Place>
                <Place>Avenue 6</Place>
              </Stop>
              <Stop kind="bus" gap={11}>
                <Time>~45 minutes</Time>
              </Stop>
              <Stop kind="end" lead={5} last>
                <Time>~08:17 AM</Time>
                <Place>The Concourse</Place>
              </Stop>
            </Stops>
          </Card>
        </SuggestCard>
      </Content>
    </Screen>
  );
}

function RouteScreen() {
  return (
    <Screen $column={5} $height={603}>
      <Back />
      <Journey $bottom={20} $raised>
        <Stops>
          <Stop kind="start" size={13} gap={14} text={12} first>
            <Place $large>401 Hougang Avenue 6</Place>
          </Stop>
          <Stop kind="end" size={13} text={12} last>
            <Place $large>Nicoll Highway MRT</Place>
          </Stop>
        </Stops>
      </Journey>
      <MapArea $height={327}>
        <RouteMap />
        <LocateButton type="button" aria-label="Locate me">
          <FaLocationArrow size={13} />
        </LocateButton>
      </MapArea>
      <Sheet>
        <Handle />
        <RouteTitle>
          <Title>Route</Title>
          NCH1
        </RouteTitle>
        <Legs>
          <Leg><FaHome size={14} color={color.pale} /></Leg>
          <Dash />
          <Leg><FaWalking size={14} color={color.icon} />5 mins</Leg>
          <Dash />
          <Leg><FaBusAlt size={14} color={color.icon} />45 mins</Leg>
          <Dash />
          <Leg><FaWalking size={14} color={color.icon} />2 mins</Leg>
          <Dash />
          <Leg><FaBuilding size={14} color={color.pale} /></Leg>
        </Legs>
        <Detail>
          <StopsIcon viewBox="0 0 13 13" aria-hidden="true">
            <g fill={color.icon}>
              <circle cx="6.5" cy="3" r="2.8" />
              <circle cx="2" cy="6.5" r="1.8" />
              <circle cx="11" cy="6.5" r="1.8" />
            </g>
            <path d="M6.5 3V13M2 6V12M11 6V12" stroke={color.icon} strokeWidth="0.8" />
          </StopsIcon>
          <DetailText $muted>3 stops</DetailText>
          <DetailLine />
          <DetailTime>07:32 AM</DetailTime>
          <Ring $size={13} />
          <DetailText>
            411 Hougang Avenue 6
            <ChangeLink href="#change">Change</ChangeLink>
          </DetailText>
          <DetailLine />
        </Detail>
      </Sheet>
    </Screen>
  );
}

function CalendarScreen() {
  return (
    <Screen $column={7} $height={607}>
      <Back />
      <CalendarHead>
        <Title $weight={700}>Choose a Start Date</Title>
        <Week>
          {["Sun", "Mon", "Tue", "Wed", "Thu", "Fri", "Sat"].map((d) => (
            <span key={d}>{d}</span>
          ))}
        </Week>
      </CalendarHead>
      <Months>
        <Month name="January 2020" before={[30, 31]} days={range(1, 31)} after={[1, 2]} selected={10} />
        <Month name="February 2020" before={[30, 31]} days={range(1, 12)} />
      </Months>
      <PayBar>
        <Summary>
          <div>
            <h3>Monthly Subscription</h3>
            <p>10 Jan 2020 - 09 Feb 2020</p>
          </div>
          <Price>$ 70.00</Price>
        </Summary>
        <PayButton type="button">Choose Payment Method</PayButton>
      </PayBar>
    </Screen>
  );
}

export default function App() {
  return (
    <>
      <GlobalStyle />
      <Page>
        <HomeScreen />
        <ResultsScreen />
        <RouteScreen />
        <CalendarScreen />
      </Page>
    </>
  );
}
